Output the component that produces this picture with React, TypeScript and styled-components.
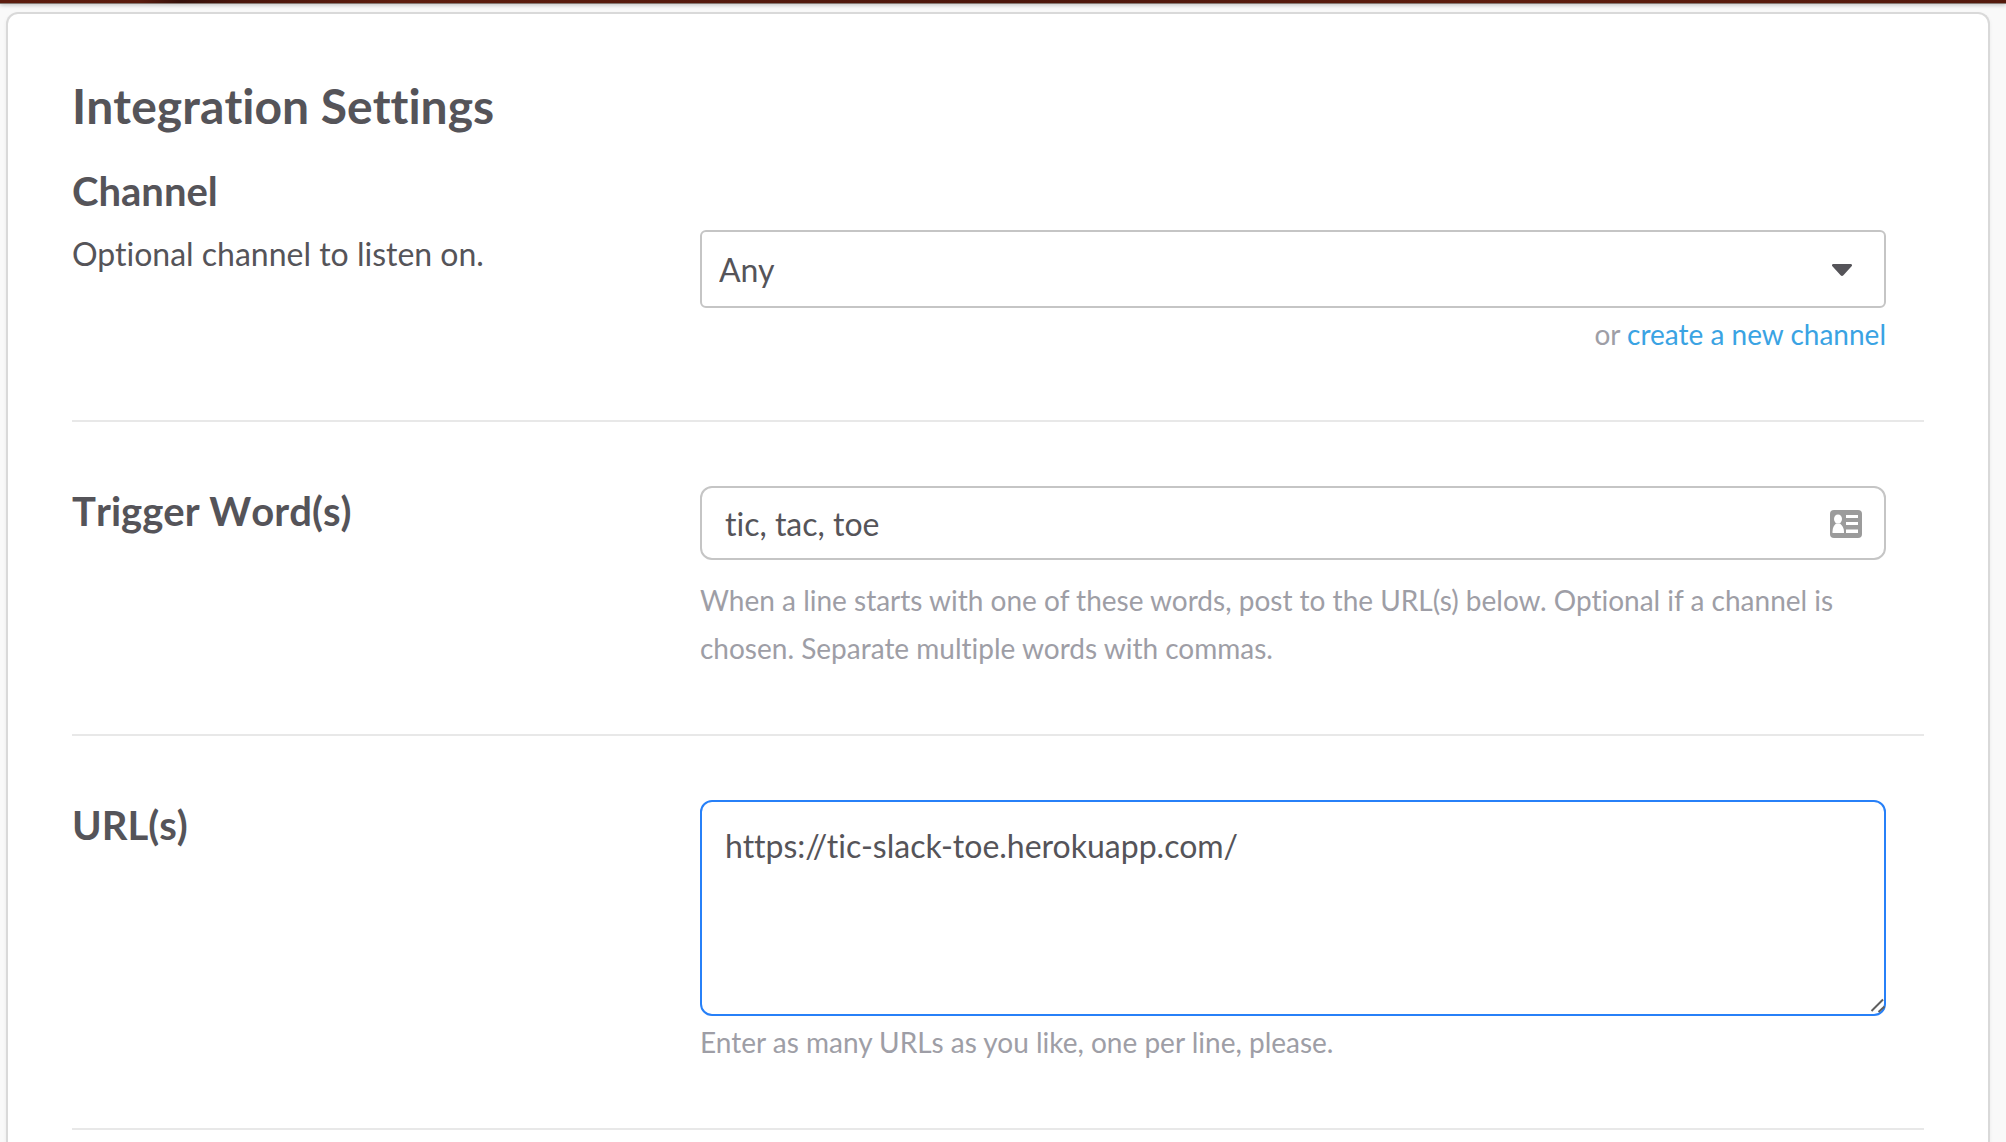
import React from "react";
import styled, { createGlobalStyle } from "styled-components";

const GlobalStyle = createGlobalStyle`
  *, *::before, *::after {
    box-sizing: border-box;
  }

  body {
    margin: 0;
    background: #f9f9f9;
    color: #555459;
    font-family: Lato, "Noto Sans", sans-serif;
    font-size: 32px;
    line-height: 48px;
    font-variant-ligatures: none;
  }
`;

const Page = styled.div`
  display: flex;
  flex-direction: column;
  min-height: 100vh;
`;

const Banner = styled.div`
  height: 4px;
  background: linear-gradient(90deg, #5c1c0e 0%, #5a1b0d 7%, #35100a 9%, #4a150b 12%, #5e1d0e 20%, #4c160b 50%, #5e1d0e 75%, #53190c 100%);
  border-bottom: 1px solid #857872;
  box-shadow: 0 1px 4px rgba(0, 0, 0, 0.25);
`;

const Card = styled.main`
  flex: 1;
  margin: 8px 16px 0 6px;
  padding: 64px 64px 0;
  background: #fff;
  border: 2px solid #d9d9d9;
  border-bottom: 0;
  border-radius: 12px 12px 0 0;
  box-shadow: 0 2px 4px rgba(0, 0, 0, 0.06);
`;

const Title = styled.h1`
  margin: 0 0 32px;
  font-size: 48px;
  line-height: 56px;
  font-weight: 700;
  font-kerning: none;
`;

const Setting = styled.section<{ $first?: boolean }>`
  display: grid;
  grid-template-columns: minmax(0, 628fr) minmax(0, 1186fr);
  padding: ${(p) => (p.$first ? "0" : "64px")} 38px 62px 0;
`;

const Divider = styled.hr`
  height: 2px;
  margin: 0;
  border: 0;
  background: #e8e8e8;
`;

const Name = styled.label`
  display: block;
  font-size: 40px;
  line-height: 50px;
  font-weight: 700;
  font-kerning: none;
`;

const Description = styled.p`
  margin: 14px 0 0;
`;

const Control = styled.div<{ $offset?: boolean }>`
  padding-top: ${(p) => (p.$offset ? "64px" : "0")};
`;

const Field = styled.div`
  position: relative;
  display: flex;
`;

const ChannelSelect = styled.select`
  width: 100%;
  height: 78px;
  padding: 2px 72px 0 17px;
  appearance: none;
  border: 2px solid #c5c5c5;
  border-radius: 6px;
  background: #fff;
  color: inherit;
  font: inherit;
  font-variant-ligatures: none;
  outline: 0;
`;

const TextInput = styled.input`
  width: 100%;
  height: 74px;
  padding: 0 72px 0 23px;
  border: 2px solid #c5c5c5;
  border-radius: 12px;
  background: #fff;
  color: inherit;
  font: inherit;
  font-variant-ligatures: none;
  outline: 0;
`;

const UrlArea = styled.textarea`
  width: 100%;
  height: 216px;
  padding: 20px 23px;
  resize: none;
  border: 2px solid #2780f8;
  border-radius: 12px;
  background: #fff;
  color: inherit;
  font: inherit;
  font-variant-ligatures: none;
  outline: 0;
`;

const Hint = styled.p<{ $gap: number; $right?: boolean }>`
  margin: ${(p) => p.$gap}px 0 0;
  color: #9e9ea6;
  font-size: 28px;
  text-align: ${(p) => (p.$right ? "right" : "left")};
`;

const Link = styled.a`
  color: #3aa3e3;
  text-decoration: none;
`;

const Adornment = styled.svg<{ $right: number }>`
  position: absolute;
  top: 0;
  bottom: 0;
  right: ${(p) => p.$right}px;
  height: 100%;
  padding-top: 2px;
  pointer-events: none;
`;

const Grip = styled.svg`
  position: absolute;
  right: 0;
  bottom: 0;
  pointer-events: none;
`;

export default function App() {
  return (
    <>
      <GlobalStyle />
      <Page>
        <Banner />
        <Card>
          <Title>Integration Settings</Title>
          <Setting $first>
            <div>
              <Name htmlFor="channel">Channel</Name>
              <Description>Optional channel to listen on.</Description>
            </div>
            <Control $offset>
              <Field>
                <ChannelSelect id="channel" defaultValue="any">
                  <option value="any">Any</option>
                </ChannelSelect>
                <Adornment $right={34} width="20" viewBox="0 0 20 12" aria-hidden="true">
                  <path d="M1.5 0h17c1.4 0 2 1.3 1.1 2.3l-8.2 9c-.8.9-2 .9-2.8 0l-8.2-9C-.5 1.3.1 0 1.5 0z" fill="#555459" />
                </Adornment>
              </Field>
              <Hint $gap={2} $right>
                or <Link href="#new-channel">create a new channel</Link>
              </Hint>
            </Control>
          </Setting>
          <Divider />
          <Setting>
            <Name htmlFor="triggers">Trigger Word(s)</Name>
            <Control>
              <Field>
                <TextInput id="triggers" type="text" defaultValue="tic, tac, toe" />
                <Adornment $right={24} width="32" viewBox="0 0 32 28" aria-hidden="true">
                  <rect width="32" height="28" rx="4" fill="#9b9b9b" />
                  <g fill="#fff">
                    <ellipse cx="8" cy="9" rx="4" ry="4.5" />
                    <path d="M2.500 23v-1.500c0-3.500 1.500-6.500 3.500-8h4c2 1.500 4 4.500 4 8V23z" />
                    <path d="M16 5h12v3H16zM16 12h12v3H16zM16 19.500h12v3.500H16z" />
                  </g>
                </Adornment>
              </Field>
              <Hint $gap={16}>
                When a line starts with one of these words, post to the URL(s) below. Optional if a channel is chosen.
                Separate multiple words with commas.
              </Hint>
            </Control>
          </Setting>
          <Divider />
          <Setting>
            <Name htmlFor="urls">URL(s)</Name>
            <Control>
              <Field>
                <UrlArea id="urls" spellCheck={false} defaultValue="https://tic-slack-toe.herokuapp.com/" />
                <Grip width="16" height="18" viewBox="0 0 16 18" aria-hidden="true">
                  <path d="M1.500 13 13 1.500M8.500 14l6-5.500" stroke="#5f5f5f" strokeWidth="2" fill="none" />
                </Grip>
              </Field>
              <Hint $gap={2}>Enter as many URLs as you like, one per line, please.</Hint>
            </Control>
          </Setting>
          <Divider />
        </Card>
      </Page>
    </>
  );
}
